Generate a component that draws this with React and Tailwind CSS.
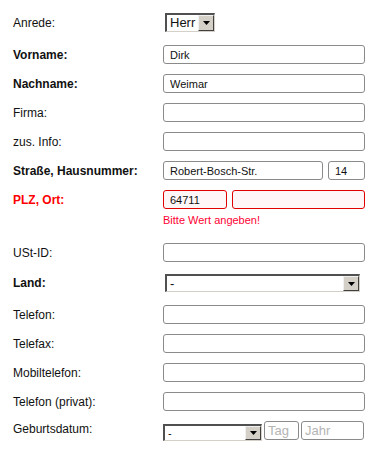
import React from "react";

const font = { fontFamily: '"Liberation Sans", Arial, sans-serif' };

function Arrow() {
  return (
    <svg width="7" height="4" viewBox="0 0 7 4">
      <polygon points="0,0 7,0 3.5,4" fill="#000" />
    </svg>
  );
}

function Select({ value, className, textClass }) {
  return (
    <div
      className={
        "flex border-t-2 border-l-2 border-t-[#505050] border-l-[#505050] border-b border-r border-b-[#d4d0c8] border-r-[#d4d0c8] bg-white " +
        className
      }
    >
      <div className={"flex-1 flex items-center pl-[3px] text-[#111] " + textClass}>{value}</div>
      <div className="w-[16px] flex items-center justify-center bg-[#d4d0c8] border-t border-l border-t-[#f0f0f0] border-l-[#f0f0f0] border-b border-r border-b-[#404040] border-r-[#404040]">
        <Arrow />
      </div>
    </div>
  );
}

function Input({ value = "", className = "", error = false, placeholder }) {
  return (
    <input
      readOnly
      value={value}
      placeholder={placeholder}
      className={
        "h-[19px] rounded-[3px] border px-[6px] text-[11px] text-[#111] outline-none " +
        (error ? "border-[#e00000] bg-[#fff7f7] " : "border-[#8a8a8a] bg-white ") +
        className
      }
      style={font}
    />
  );
}

function Row({ label, bold, red, mt, h = "h-[19px]", children }) {
  return (
    <div className={"flex items-center " + h + " " + mt}>
      <div
        className={
          "w-[150px] shrink-0 text-[12px] leading-[14px] " +
          (bold ? "font-bold " : "") +
          (red ? "text-[#ff0000]" : "text-[#111]")
        }
      >
        {label}
      </div>
      <div className="flex items-center">{children}</div>
    </div>
  );
}

export default function App() {
  return (
    <div className="w-[387px] h-[455px] bg-white pt-[13px] pl-[13px]" style={font}>
      <Row label="Anrede:" mt="">
        <Select value="Herr" className="ml-[2px] w-[50px] h-[19px]" textClass="text-[13px]" />
      </Row>
      <Row label="Vorname:" bold mt="mt-[13px]">
        <Input value="Dirk" className="w-[202px]" />
      </Row>
      <Row label="Nachname:" bold mt="mt-[10px]">
        <Input value="Weimar" className="w-[202px]" />
      </Row>
      <Row label="Firma:" mt="mt-[10px]">
        <Input className="w-[202px]" />
      </Row>
      <Row label="zus. Info:" mt="mt-[10px]">
        <Input className="w-[202px]" />
      </Row>
      <Row label="Straße, Hausnummer:" bold mt="mt-[10px]">
        <Input value="Robert-Bosch-Str." className="w-[160px]" />
        <Input value="14" className="ml-[5px] w-[37px]" />
      </Row>
      <Row label="PLZ, Ort:" bold red mt="mt-[10px]">
        <Input value="64711" error className="w-[64px]" />
        <Input error className="ml-[5px] w-[133px]" />
      </Row>
      <div className="mt-[5px] ml-[150px] text-[11px] leading-[13px] text-[#ff0033]">
        Bitte Wert angeben!
      </div>
      <Row label="USt-ID:" mt="mt-[16px]">
        <Input className="w-[202px]" />
      </Row>
      <Row label="Land:" bold mt="mt-[12px]" h="h-[18px]">
        <Select value="-" className="ml-[2px] w-[195px] h-[18px]" textClass="text-[13px]" />
      </Row>
      <Row label="Telefon:" mt="mt-[13px]">
        <Input className="w-[202px]" />
      </Row>
      <Row label="Telefax:" mt="mt-[10px]">
        <Input className="w-[202px]" />
      </Row>
      <Row label="Mobiltelefon:" mt="mt-[10px]">
        <Input className="w-[202px]" />
      </Row>
      <Row label="Telefon (privat):" mt="mt-[10px]">
        <Input className="w-[202px]" />
      </Row>
      <div className="flex items-start h-[20px] mt-[10px]">
        <div className="w-[150px] shrink-0 text-[12px] leading-[14px] text-[#111] mt-[1px]">
          Geburtsdatum:
        </div>
        <Select value="-" className="mt-[3px] w-[99px] h-[17px]" textClass="text-[11px]" />
        <input
          readOnly
          placeholder="Tag"
          className="ml-[2px] w-[35px] h-[19px] rounded-[3px] border border-[#8a8a8a] px-[3px] text-[13px] outline-none placeholder:text-[#b4b4b4]"
          style={font}
        />
        <input
          readOnly
          placeholder="Jahr"
          className="ml-[2px] w-[63px] h-[19px] rounded-[3px] border border-[#8a8a8a] px-[3px] text-[13px] outline-none placeholder:text-[#b4b4b4]"
          style={font}
        />
      </div>
    </div>
  );
}
